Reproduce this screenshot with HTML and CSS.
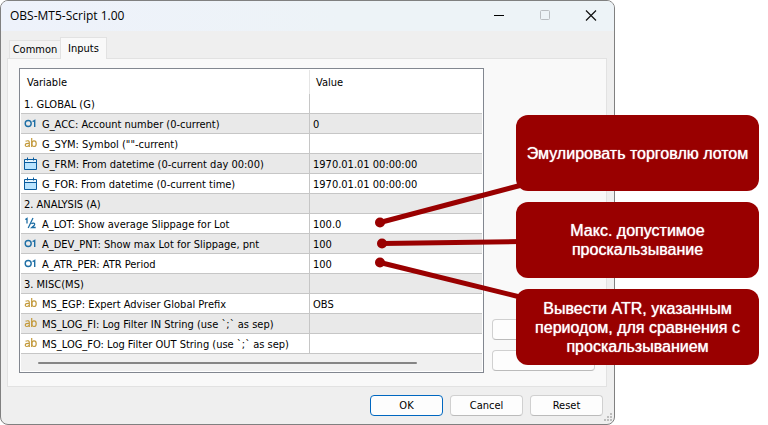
FILE: index.html
```html
<!DOCTYPE html>
<html lang="en">
<head>
<meta charset="utf-8">
<title>OBS-MT5-Script 1.00</title>
<link rel="stylesheet" href="styles.css">
</head>
<body>
<svg class="defs" aria-hidden="true">
  <symbol id="int" viewBox="0 0 14 14"><g fill="none" stroke="#1f6fa5" stroke-width="1.4"><ellipse cx="4.2" cy="6.500" rx="3" ry="3"/><path d="M8.600 4.600 10.700 3.500V10"/></g></symbol>
  <symbol id="str" viewBox="0 0 14 14"><g fill="none" stroke="#c39a3c" stroke-width="1.2"><path d="M1.500 4.300Q5.300 2.800 5.300 5.500V10M5.300 6.300Q1.300 6.100 1.300 8 1.300 9.600 3 9.500 4.600 9.400 5.300 8"/><path d="M7.700 1V10"/><ellipse cx="10" cy="6.700" rx="2.200" ry="2.800"/></g></symbol>
  <symbol id="date" viewBox="0 0 14 14"><path d="M0.500 2.500H12.500V12.500H0.500Z" fill="#b9e4ff" stroke="#0a5c9e"/><path d="M1 3H12V5H1Z" fill="#e9f6fe"/><path d="M0.500 5.500H12.500M3.500 0.500V3.500M9.500 0.500V3.500" stroke="#0a5c9e" fill="none"/></symbol>
  <symbol id="half" viewBox="0 0 14 14"><path d="M1.300 2.500 3 1.500V6.500M9 1 4.200 11M7.500 7Q8.300 5.800 9.700 6.200 11.300 6.800 10.300 8.200L7.700 10.500H11.700" stroke="#1f6fa5" stroke-width="1.300" fill="none"/></symbol>
</svg>
<main class="stage">
  <section class="window">
    <header class="titlebar">
      <h1>OBS-MT5-Script 1.00</h1>
      <button class="sys" aria-label="Minimize"><svg viewBox="0 0 12 12"><path d="M1 5.500H11" stroke="#000"/></svg></button>
      <button class="sys" aria-label="Maximize" disabled><svg viewBox="0 0 12 12"><rect x="1.500" y="0.500" width="9" height="9" rx="1" fill="none" stroke="#b9bdc1"/></svg></button>
      <button class="sys" aria-label="Close"><svg viewBox="0 0 12 12"><path d="M1 0.500 11 10.500M11 0.500 1 10.500" stroke="#111" stroke-width="1.200"/></svg></button>
    </header>
    <div class="content">
      <div class="tabs" role="tablist">
        <button class="tab" role="tab" aria-selected="false">Common</button>
        <button class="tab active" role="tab" aria-selected="true">Inputs</button>
      </div>
      <div class="panel">
        <div class="grid">
          <table>
            <thead><tr><th class="variable">Variable</th><th>Value</th></tr></thead>
            <tbody>
              <tr><td>1. GLOBAL (G)</td><td></td></tr>
              <tr><td><svg class="icon"><use href="#int"/></svg>G_ACC: Account number (0-current)</td><td>0</td></tr>
              <tr><td><svg class="icon"><use href="#str"/></svg>G_SYM: Symbol (""-current)</td><td></td></tr>
              <tr><td><svg class="icon"><use href="#date"/></svg>G_FRM: From datetime (0-current day 00:00)</td><td>1970.01.01 00:00:00</td></tr>
              <tr><td><svg class="icon"><use href="#date"/></svg>G_FOR: From datetime (0-current time)</td><td>1970.01.01 00:00:00</td></tr>
              <tr><td>2. ANALYSIS (A)</td><td></td></tr>
              <tr><td><svg class="icon"><use href="#half"/></svg>A_LOT: Show average Slippage for Lot</td><td>100.0</td></tr>
              <tr><td><svg class="icon"><use href="#int"/></svg>A_DEV_PNT: Show max Lot for Slippage, pnt</td><td>100</td></tr>
              <tr><td><svg class="icon"><use href="#int"/></svg>A_ATR_PER: ATR Period</td><td>100</td></tr>
              <tr><td>3. MISC(MS)</td><td></td></tr>
              <tr><td><svg class="icon"><use href="#str"/></svg>MS_EGP: Expert Adviser Global Prefix</td><td>OBS</td></tr>
              <tr><td><svg class="icon"><use href="#str"/></svg>MS_LOG_FI: Log Filter IN String (use `;` as sep)</td><td></td></tr>
              <tr><td><svg class="icon"><use href="#str"/></svg>MS_LOG_FO: Log Filter OUT String (use `;` as sep)</td><td></td></tr>
            </tbody>
          </table>
          <div class="scroll"><div class="thumb"></div></div>
        </div>
        <div class="side">
          <button class="btn" aria-label="Load"></button>
          <button class="btn" aria-label="Save"></button>
        </div>
      </div>
      <footer class="actions">
        <button class="btn primary">OK</button>
        <button class="btn">Cancel</button>
        <button class="btn">Reset</button>
      </footer>
    </div>
    <svg class="grip" viewBox="0 0 10 10" aria-hidden="true"><path d="M7 1h2M4 4h2M7 4h2M1 7h2M4 7h2M7 7h2" stroke="#bdbdbd" stroke-width="2"/></svg>
  </section>
  <svg class="leaders" viewBox="0 0 160 100" aria-hidden="true">
    <g stroke="#990000" stroke-width="5"><path d="M10 22.500 152 -15"/><path d="M12 43.500 150 41.500"/><path d="M10 62.500 152 97.500"/></g>
    <g fill="#990000"><circle cx="10" cy="22.500" r="5"/><circle cx="12" cy="43.500" r="5"/><circle cx="10" cy="62.500" r="5"/></g>
  </svg>
  <aside class="callouts" lang="ru">
    <p>Эмулировать торговлю лотом</p>
    <p>Макс. допустимое проскальзывание</p>
    <p>Вывести ATR, указанным периодом, для сравнения с проскальзыванием</p>
  </aside>
</main>
</body>
</html>
```
FILE: styles.css
```css
* { box-sizing: border-box; }
body {
  margin: 0;
  background: #fff;
  color: #000;
  font: 11px/14px "DejaVu Sans Condensed", "Noto Sans", sans-serif;
}
.defs { display: none; }
button { font: inherit; color: inherit; padding: 0; margin: 0; }
.stage { position: relative; padding-right: 153px; }
.window {
  position: relative;
  border: 1px solid #808080;
  border-radius: 8px;
  background: #efefef;
  overflow: hidden;
}
.titlebar {
  display: flex;
  align-items: center;
  height: 30px;
  padding-left: 9px;
  background: linear-gradient(90deg, #eef2fb, #edf3f7 55%);
}
.titlebar h1 {
  flex: 1;
  margin: 0;
  font: 12px/16px "Open Sans", "Noto Sans", sans-serif;
}
.sys { width: 46px; height: 30px; border: 0; background: none; }
.sys svg { display: block; width: 12px; height: 12px; margin: 0 auto; }
.content { padding: 6px 7px 8px 6px; }
.tabs { display: flex; align-items: flex-end; padding-left: 2px; }
.tab {
  height: 18px;
  width: 52px;
  border: 1px solid #e2e2e2;
  border-bottom: 0;
  background: #f3f3f3;
}
.tab.active {
  position: relative;
  z-index: 1;
  width: 47px;
  height: 22px;
  margin: 0 0 -1px -1px;
  background: #f9f9f9;
}
.panel {
  display: flex;
  gap: 8px;
  padding: 9px 11px 13px;
  border: 1px solid #e2e2e2;
  background: #f9f9f9;
}
.grid {
  flex: 1;
  min-width: 0;
  padding: 1px;
  border: 1px solid #828790;
  background: #fff;
}
table { width: 100%; table-layout: fixed; border-collapse: separate; border-spacing: 0; }
th, td { text-align: left; font-weight: normal; white-space: nowrap; overflow: hidden; }
th { height: 24px; padding: 1px 6px 0; }
.variable { width: 289px; border-right: 1px solid #e5e5e5; }
td { height: 20px; padding: 2px 3px 0; border-bottom: 1px solid #c6c6c6; }
td:first-child { border-right: 1px solid #c6c6c6; }
tbody tr:nth-child(even) { background: #e9e9e9; }
.icon { width: 14px; height: 14px; margin: 0 4px 2px 0; vertical-align: middle; }
.scroll { height: 17px; padding: 8px 65px 7px 17px; background: #f0f0f0; }
.thumb { height: 2px; border-radius: 1px; background: #858585; }
.side {
  display: flex;
  flex-direction: column;
  justify-content: flex-end;
  gap: 10px;
  width: 103px;
  padding-bottom: 2px;
}
.btn {
  height: 21px;
  border: 1px solid #d0d0d0;
  border-bottom-color: #bbb;
  border-radius: 4px;
  background: #fdfdfd;
}
.actions { display: flex; justify-content: flex-end; gap: 7px; padding: 8px 4px 0; }
.actions .btn { width: 73px; }
.actions .primary { border-color: #0067c0; }
.grip { position: absolute; right: 1px; bottom: 1px; width: 10px; height: 10px; }
.leaders {
  position: absolute;
  top: 200px;
  right: 238px;
  width: 160px;
  height: 100px;
  overflow: visible;
}
.callouts {
  position: absolute;
  top: 115px;
  right: 9px;
  width: 243px;
  display: grid;
  gap: 11px;
}
.callouts p {
  display: flex;
  align-items: center;
  justify-content: center;
  min-height: 76px;
  margin: 0;
  padding: 8px;
  border-radius: 12px;
  background: #900;
  color: #fff;
  text-align: center;
  font: 16px/19px "Liberation Sans", Arial, sans-serif;
  text-shadow: 0 0 1px #fff;
}
```
